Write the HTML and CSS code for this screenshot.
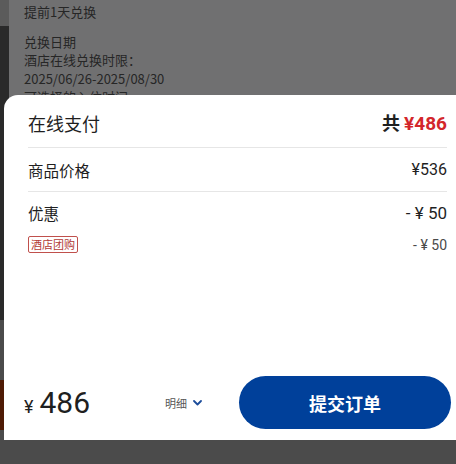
FILE: index.html
```html
<!DOCTYPE html>
<html lang="zh-CN">
<head>
    <meta charset="UTF-8">
    <meta name="viewport" content="width=device-width, initial-scale=1.0">
    <title>在线支付</title>
    <link rel="stylesheet" href="styles.css">
</head>
<body>
    <div class="screen">
        <div class="behind">
            <div class="strip">
                <div class="seg seg-top"></div>
                <div class="seg seg-dark"></div>
                <div class="seg seg-mid"></div>
                <div class="seg seg-brown"></div>
                <div class="seg seg-rest"></div>
            </div>
            <div class="panel">
                <p class="note">提前1天兑换</p>
                <p class="note">
                    兑换日期<br>
                    酒店在线兑换时限：<br>
                    2025/06/26-2025/08/30<br>
                    可选择的入住时间
                </p>
            </div>
        </div>

        <div class="sheet">
            <div class="sheet-head">
                <span class="title">在线支付</span>
                <span class="sum">共<em>¥486</em></span>
            </div>
            <div class="row">
                <span>商品价格</span>
                <span class="num">¥536</span>
            </div>
            <div class="row row-discount">
                <span>优惠</span>
                <span class="num">- ¥ 50</span>
            </div>
            <div class="sub-row">
                <span class="tag">酒店团购</span>
                <span class="num small">- ¥ 50</span>
            </div>

            <div class="footer">
                <div class="total"><span class="yen">¥</span>486</div>
                <div class="detail">
                    明细
                    <svg width="9" height="6" viewBox="0 0 9 6"><path d="M1 1l3.5 3.5L8 1" fill="none" stroke="#1d4d9b" stroke-width="1.8" stroke-linecap="round" stroke-linejoin="round"/></svg>
                </div>
                <button class="submit">提交订单</button>
            </div>
        </div>
    </div>
</body>
</html>
```

FILE: styles.css
```css
body {
    margin: 0;
    font-family: "Noto Sans CJK SC", "Noto Sans", sans-serif;
    background-color: #4b4b4b;
    overflow: hidden;
}
.screen {
    position: relative;
    width: 456px;
    height: 464px;
    background-color: #4b4b4b;
}
.behind {
    display: flex;
    height: 100%;
}
.strip {
    width: 9px;
    display: flex;
    flex-direction: column;
}
.seg {
    flex-shrink: 0;
}
.seg-top {
    height: 26px;
    background-color: #5b5b5b;
}
.seg-dark {
    height: 294px;
    background-color: #2a2a2a;
}
.seg-mid {
    height: 60px;
    background-color: #4b4b4b;
}
.seg-brown {
    height: 50px;
    background-color: #4e1a04;
}
.seg-rest {
    flex: 1;
    background-color: #4b4b4b;
}
.panel {
    flex: 1;
    height: 120px;
    background-color: #707071;
    padding: 3px 15px 0;
    color: #262626;
    font-size: 13px;
    line-height: 18.5px;
}
.note {
    margin: 0 0 11px;
}

/* bottom sheet over the dimmed page */
.sheet {
    position: absolute;
    left: 4px;
    top: 95px;
    right: 0;
    height: 345px;
    background-color: #fff;
    border-top-left-radius: 14px;
    display: flex;
    flex-direction: column;
    color: #1f1f1f;
}
.sheet-head, .row, .sub-row {
    display: flex;
    justify-content: space-between;
    align-items: center;
    margin: 0 9px 0 24px;
}
.sheet-head {
    padding: 16px 0 12px;
    line-height: 22px;
    border-bottom: 1px solid #e6e6e6;
}
.title {
    font-size: 18px;
}
.sum {
    font-size: 18px;
    font-weight: bold;
}
.sum em {
    font-style: normal;
    color: #d3262b;
    font-family: "Roboto", "Noto Sans CJK SC", sans-serif;
    font-size: 19px;
    margin-left: 4px;
}
.row {
    height: 43px;
    font-size: 15.5px;
    border-bottom: 1px solid #e6e6e6;
}
.row-discount {
    height: 42px;
    border-bottom: none;
}
.num {
    font-family: "Roboto", "Noto Sans CJK SC", sans-serif;
    font-size: 16px;
}
.row-discount .num {
    font-size: 17px;
}
.num.small {
    font-size: 14px;
    color: #4a4a4a;
}
.sub-row {
    margin-top: 2px;
}
.tag {
    font-size: 11px;
    line-height: 15px;
    color: #b23a36;
    border: 1px solid #c0504c;
    border-radius: 2px;
    padding: 0 2px;
}
.footer {
    margin-top: auto;
    margin-bottom: 11px;
    display: flex;
    align-items: center;
    padding-left: 20px;
    padding-right: 5px;
}
.total {
    width: 141px;
    font-family: "Roboto", "Noto Sans CJK SC", sans-serif;
    font-size: 30px;
    color: #1f1f1f;
}
.yen {
    font-size: 18px;
    margin-right: 6px;
}
.detail {
    display: flex;
    align-items: center;
    gap: 6px;
    font-size: 11px;
    color: #555;
}
.submit {
    margin-left: auto;
    width: 212px;
    height: 53px;
    border: none;
    border-radius: 27px;
    background-color: #00409a;
    color: #fff;
    font-family: "Noto Sans CJK SC", sans-serif;
    font-size: 18px;
    font-weight: bold;
}
```
